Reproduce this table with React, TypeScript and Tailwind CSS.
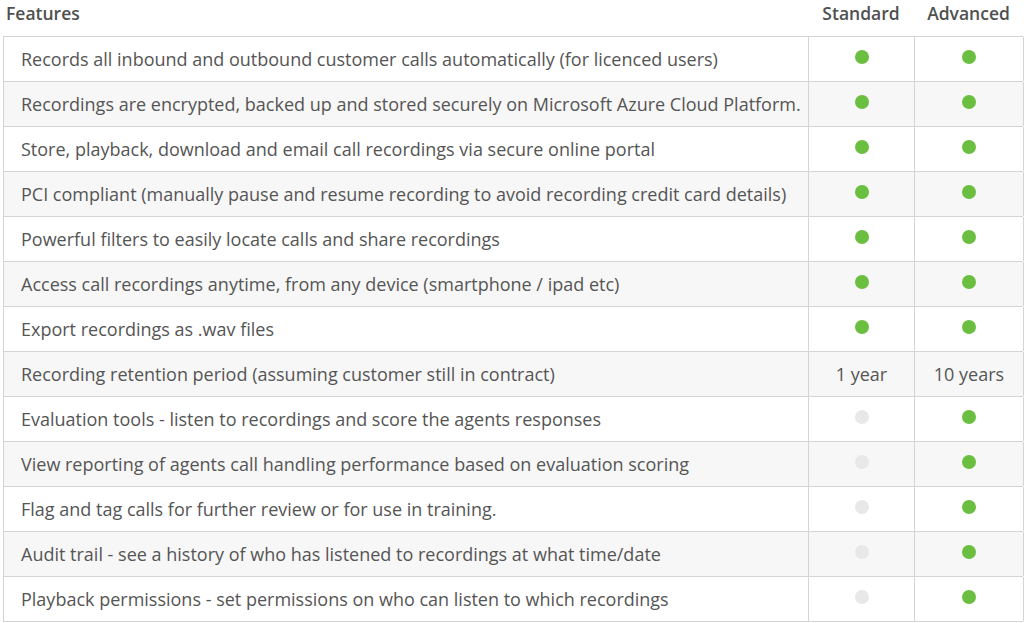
const rows: { label: string; std: string | boolean; adv: string | boolean }[] = [
  { label: "Records all inbound and outbound customer calls automatically (for licenced users)", std: true, adv: true },
  { label: "Recordings are encrypted, backed up and stored securely on Microsoft Azure Cloud Platform.", std: true, adv: true },
  { label: "Store, playback, download and email call recordings via secure online portal", std: true, adv: true },
  { label: "PCI compliant (manually pause and resume recording to avoid recording credit card details)", std: true, adv: true },
  { label: "Powerful filters to easily locate calls and share recordings", std: true, adv: true },
  { label: "Access call recordings anytime, from any device (smartphone / ipad etc)", std: true, adv: true },
  { label: "Export recordings as .wav files", std: true, adv: true },
  { label: "Recording retention period (assuming customer still in contract)", std: "1 year", adv: "10 years" },
  { label: "Evaluation tools - listen to recordings and score the agents responses", std: false, adv: true },
  { label: "View reporting of agents call handling performance based on evaluation scoring", std: false, adv: true },
  { label: "Flag and tag calls for further review or for use in training.", std: false, adv: true },
  { label: "Audit trail - see a history of who has listened to recordings at what time/date", std: false, adv: true },
  { label: "Playback permissions - set permissions on who can listen to which recordings", std: false, adv: true },
];

function Cell({ value }: { value: string | boolean }) {
  if (typeof value === "string") {
    return <div className="pt-[9px] text-center">{value}</div>;
  }
  return (
    <div className="flex justify-center pt-[13px]">
      <span className={`block w-[14px] h-[14px] rounded-full ${value ? "bg-[#6abf40]" : "bg-[#e8e8e8]"}`} />
    </div>
  );
}

export default function App() {
  return (
    <div className="w-[1024px] h-[623px] bg-white overflow-hidden text-[#555] text-[18px]" style={{ fontFamily: '"Open Sans", sans-serif' }}>
      <div className="ml-[3px] w-[1020px]">
        {/* Header */}
        <div className="grid grid-cols-[805px_106px_109px] h-[36px] font-semibold text-[17.5px] text-[#505050]">
          <div className="pl-[3px]">Features</div>
          <div className="text-center">Standard</div>
          <div className="text-center">Advanced</div>
        </div>
        <div className="border-t border-l border-[#d4d4d4]">
          {rows.map((r, i) => (
            <div
              key={i}
              className={`grid grid-cols-[805px_106px_109px] h-[45px] border-b border-[#d4d4d4] ${i % 2 === 1 ? "bg-[#f7f7f7]" : "bg-white"}`}
            >
              <div className="pl-[17px] pt-[9px] border-r border-[#d4d4d4] whitespace-nowrap">{r.label}</div>
              <div className="border-r border-[#d4d4d4]"><Cell value={r.std} /></div>
              <div className="border-r border-[#d4d4d4]"><Cell value={r.adv} /></div>
            </div>
          ))}
        </div>
      </div>
    </div>
  );
}
